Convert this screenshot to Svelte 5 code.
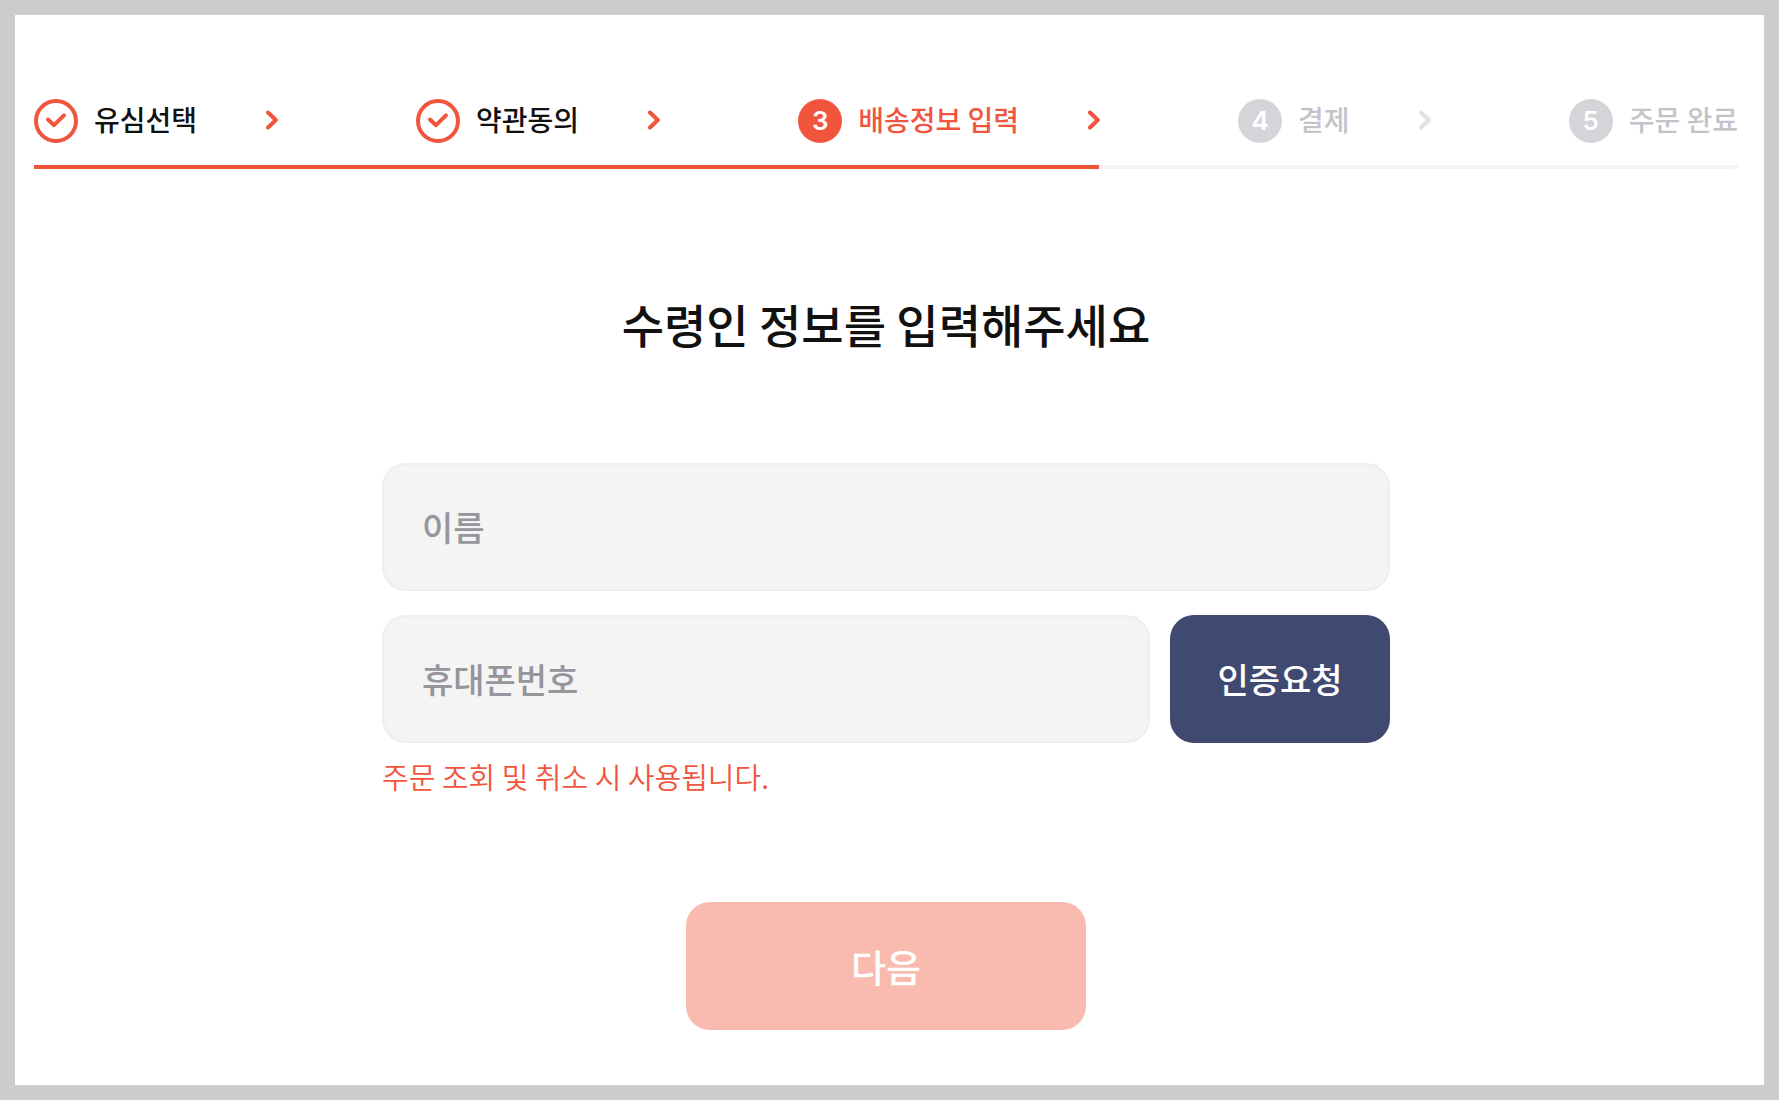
<script lang="ts">
	type StepState = 'done' | 'current' | 'upcoming';

	interface Step {
		label: string;
		state: StepState;
	}

	const steps: Step[] = [
		{ label: '유심선택', state: 'done' },
		{ label: '약관동의', state: 'done' },
		{ label: '배송정보 입력', state: 'current' },
		{ label: '결제', state: 'upcoming' },
		{ label: '주문 완료', state: 'upcoming' }
	];

	let name = $state('');
	let phone = $state('');

	let canContinue = $derived(name.trim() !== '' && phone.trim() !== '');
</script>

<div class="frame">
	<main class="page">
		<nav class="stepper" aria-label="주문 단계">
			<ol class="steps">
				{#each steps as step, i}
					<li class="step {step.state}" aria-current={step.state === 'current' ? 'step' : undefined}>
						{#if step.state === 'done'}
							<svg class="marker" viewBox="0 0 44 44" fill="none" stroke="currentColor" stroke-width="4" aria-hidden="true">
								<circle cx="22" cy="22" r="20" />
								<path d="M14 20.5L20 26.2L30 16.3" stroke-linecap="round" stroke-linejoin="round" />
							</svg>
						{:else}
							<span class="marker number">{i + 1}</span>
						{/if}
						<span class="label">{step.label}</span>
						{#if i < steps.length - 1}
							<svg class="chevron" viewBox="0 0 12 20" fill="none" stroke="currentColor" stroke-width="4" aria-hidden="true">
								<path d="M2 2.5L9.8 10L2 17.5" stroke-linecap="round" stroke-linejoin="round" />
							</svg>
						{/if}
					</li>
				{/each}
			</ol>
			<div class="track"><div class="progress"></div></div>
		</nav>

		<h1>수령인 정보를 입력해주세요</h1>

		<form onsubmit={(e) => e.preventDefault()}>
			<input type="text" placeholder="이름" aria-label="이름" bind:value={name} />
			<div class="phone-row">
				<input
					type="tel"
					placeholder="휴대폰번호"
					aria-label="휴대폰번호"
					aria-describedby="phone-hint"
					bind:value={phone}
				/>
				<button type="button" class="verify">인증요청</button>
			</div>
			<p id="phone-hint" class="hint">주문 조회 및 취소 시 사용됩니다.</p>
			<button type="submit" class="next" disabled={!canContinue}>다음</button>
		</form>
	</main>
</div>

<style>
	:global(body) {
		background: #ccc;
	}

	.frame {
		box-sizing: border-box;
		min-height: 100vh;
		padding: 15px;
		display: flex;
		font-family: 'Noto Sans CJK KR', 'Noto Sans', sans-serif;
		color: #111;
	}

	.page {
		flex: 1;
		padding: 84px 26px 55px 19px;
		background: #fff;
	}

	.steps {
		display: flex;
		justify-content: space-between;
		margin: 0;
		padding: 0;
		list-style: none;
	}

	.step {
		display: flex;
		align-items: center;
		font-size: 28px;
		font-weight: 500;
		line-height: 44px;
		white-space: nowrap;
	}

	.marker {
		width: 44px;
		height: 44px;
		margin-right: 16px;
		flex: none;
		color: #f2553d;
	}

	.number {
		border-radius: 50%;
		background: #f2553d;
		color: #fff;
		font-family: Inter, sans-serif;
		font-size: 26px;
		font-weight: 600;
		text-align: center;
	}

	.label {
		line-height: 40px;
		padding-bottom: 4px;
	}

	.current .label {
		color: #f2553d;
	}

	.upcoming .label {
		color: #c4c3ca;
	}

	.upcoming .number {
		background: #d5d4d9;
	}

	.chevron {
		width: 12px;
		height: 20px;
		margin: 0 0 2px 69px;
		color: #f2553d;
	}

	.upcoming .chevron {
		color: #e2e2e2;
	}

	.track {
		height: 4px;
		margin-top: 22px;
		border-radius: 0 0 6px 0;
		background: #f4f4f4;
		overflow: hidden;
	}

	.progress {
		width: 62.5%;
		height: 100%;
		background: #ef5439;
	}

	h1 {
		margin: 119px 0 105px;
		font-size: 46px;
		font-weight: 500;
		line-height: 70px;
		text-align: center;
	}

	form {
		display: flex;
		flex-direction: column;
		max-width: 1008px;
		margin: 0 auto;
	}

	input {
		box-sizing: border-box;
		width: 100%;
		min-width: 0;
		height: 128px;
		padding: 0 38px 2px;
		border: 2px solid #eee;
		border-radius: 24px;
		background: #f4f4f4;
		color: #111;
		font: inherit;
		font-size: 34px;
		font-weight: 500;
	}

	input::placeholder {
		color: #96959c;
		opacity: 1;
	}

	button {
		height: 128px;
		padding: 0 0 2px;
		border: 0;
		border-radius: 24px;
		color: #fff;
		font: inherit;
		font-weight: 500;
		cursor: pointer;
	}

	.phone-row {
		display: flex;
		gap: 20px;
		margin-top: 24px;
	}

	.verify {
		flex: none;
		width: 220px;
		background: #40496f;
		font-size: 34px;
	}

	.hint {
		margin: 11px 0 0;
		color: #f2553d;
		font-size: 29px;
		font-weight: 350;
		line-height: 44px;
	}

	.next {
		align-self: center;
		width: 400px;
		margin-top: 104px;
		background: #f2553d;
		font-size: 38px;
	}

	.next:disabled {
		background: #f9bab0;
		cursor: default;
	}
</style>
